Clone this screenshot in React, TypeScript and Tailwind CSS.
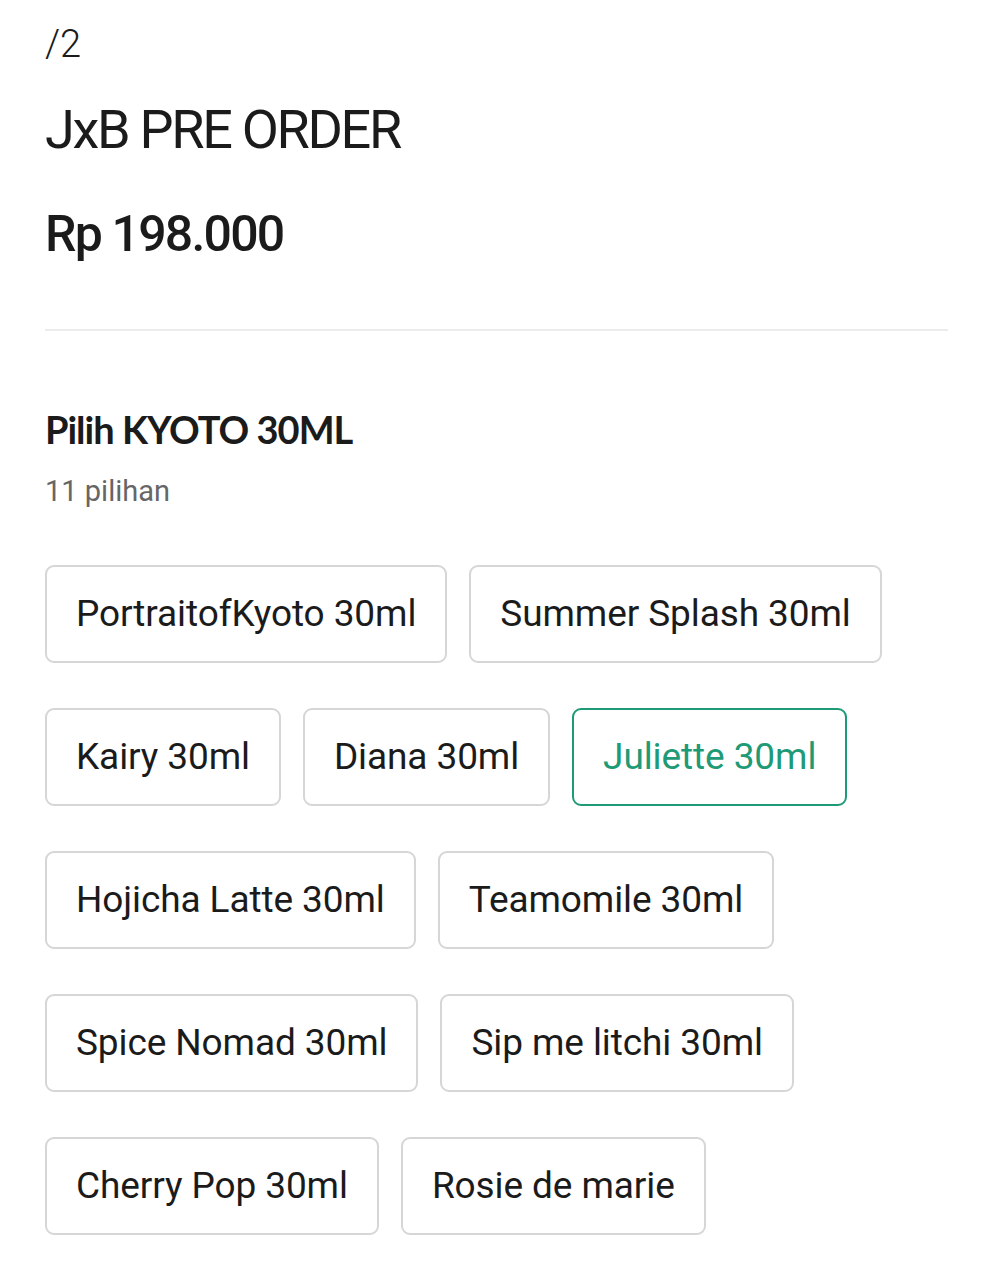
import React, { useState } from 'react';

const VARIANTS = [
  'PortraitofKyoto 30ml',
  'Summer Splash 30ml',
  'Kairy 30ml',
  'Diana 30ml',
  'Juliette 30ml',
  'Hojicha Latte 30ml',
  'Teamomile 30ml',
  'Spice Nomad 30ml',
  'Sip me litchi 30ml',
  'Cherry Pop 30ml',
  'Rosie de marie',
];

export default function App() {
  const [selected, setSelected] = useState('Juliette 30ml');

  return (
    <div className="min-h-screen bg-white px-[45px] pt-[22px] text-[#1b1b1b] font-['Roboto',sans-serif]">
      {/* Header */}
      <p className="text-[38px] leading-[44px] font-light">/2</p>
      <h1 className="mt-[32px] text-[54px] leading-[64px] tracking-[-2.3px]">JxB PRE ORDER</h1>
      <p className="mt-[40px] text-[50px] leading-[64px] font-medium tracking-[-1.8px]">Rp 198.000</p>

      <div className="mt-[63px] h-[2px] bg-[#ececec]" />

      {/* Variant picker */}
      <h2 className="mt-[75px] text-[38px] leading-[46px] font-bold tracking-[-1px] font-['Lato',sans-serif]">
        Pilih KYOTO 30ML
      </h2>
      <p className="mt-[19px] text-[29px] leading-[40px] text-[#666]">11 pilihan</p>

      <div className="mt-[54px] flex flex-wrap gap-x-[22px] gap-y-[45px]">
        {VARIANTS.map((name) => {
          const active = selected === name;
          return (
            <button
              key={name}
              onClick={() => setSelected(name)}
              className={
                'h-[98px] rounded-[9px] border-2 px-[29px] text-[37px] tracking-[-0.1px] ' +
                (active ? 'border-[#1f9a76] text-[#1f9a76]' : 'border-[#d6d6d6] text-[#1b1b1b]')
              }
            >
              {name}
            </button>
          );
        })}
      </div>
    </div>
  );
}
